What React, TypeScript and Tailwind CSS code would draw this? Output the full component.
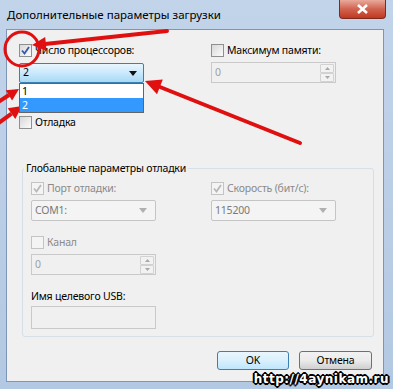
import type { ReactNode } from 'react'

const font = { fontFamily: '"Noto Sans", "Open Sans", sans-serif' }

const Check = ({ checked, disabled }: { checked?: boolean; disabled?: boolean }) => (
    <span
        className={
            'relative flex h-[13px] w-[13px] shrink-0 items-center justify-center border ' +
            (disabled
                ? 'border-[#c4c4c4] bg-[#f4f4f4]'
                : 'border-[#8e8f8f] bg-gradient-to-br from-[#d8d8d8] to-[#fbfbfb]')
        }
    >
        {checked && (
            <svg width="9" height="9" viewBox="0 0 9 9">
                <path
                    d="M1 4.5 L3.5 7.5 L8 1"
                    fill="none"
                    stroke={disabled ? '#b8b8b8' : '#3a57a6'}
                    strokeWidth="1.8"
                />
            </svg>
        )}
    </span>
)

const CheckRow = ({
    label,
    checked,
    disabled,
    gray,
    className = '',
}: {
    label: string
    checked?: boolean
    disabled?: boolean
    gray?: boolean
    className?: string
}) => (
    <div className={'flex h-[13px] items-center gap-[3px] ' + className}>
        <Check checked={checked} disabled={disabled} />
        <span
            className={
                'whitespace-nowrap text-[10.5px] leading-none tracking-[-0.2px] ' +
                (gray ? 'text-[#8a8a8a]' : 'text-black')
            }
        >
            {label}
        </span>
    </div>
)

const Arrow = ({ color }: { color: string }) => (
    <svg width="8" height="5" viewBox="0 0 8 5">
        <path d="M0 0 H8 L4 5 Z" fill={color} />
    </svg>
)

const Combo = ({ value, className = '' }: { value: string; className?: string }) => (
    <div
        className={
            'flex h-[21px] w-[125px] items-center justify-between rounded-[2px] border border-[#c5c5c5] bg-[#f4f4f4] pl-[3px] pr-[8px] ' +
            className
        }
    >
        <span className="text-[10.5px] tracking-[-0.2px] text-[#7a7a7a]">{value}</span>
        <Arrow color="#b0b0b0" />
    </div>
)

const SpinBtn = ({ up }: { up?: boolean }) => (
    <div className="flex h-[9px] w-[14px] items-center justify-center rounded-[1px] border border-[#d2d2d2] bg-[#f2f2f2]">
        <svg width="5" height="3" viewBox="0 0 5 3">
            <path d={up ? 'M0 3 H5 L2.5 0 Z' : 'M0 0 H5 L2.5 3 Z'} fill="#a8a8a8" />
        </svg>
    </div>
)

const Spin = ({ className = '' }: { className?: string }) => (
    <div
        className={
            'flex h-[21px] w-[125px] items-center justify-between border border-[#c9c9c9] bg-[#f0f0f0] pl-[3px] pr-[1px] ' +
            className
        }
    >
        <span className="text-[10.5px] text-[#a0a0a0]">0</span>
        <div className="flex flex-col">
            <SpinBtn up />
            <SpinBtn />
        </div>
    </div>
)

const Button = ({ children, primary }: { children: ReactNode; primary?: boolean }) => (
    <div
        className={
            'flex h-[19px] items-center justify-center rounded-[3px] border text-[10.5px] tracking-[-0.2px] ' +
            (primary
                ? 'w-[72px] border-[#3c7fb1] bg-gradient-to-b from-[#eaf6fd] via-[#d9f0fc] to-[#bee6fd]'
                : 'w-[73px] border-[#707070] bg-gradient-to-b from-[#f2f2f2] via-[#ebebeb] to-[#cfcfcf]')
        }
    >
        {children}
    </div>
)

export default function App() {
    return (
        <div className="relative h-[389px] w-[393px] overflow-hidden bg-gradient-to-b from-[#c2d4ea] to-[#b3c8e2]" style={font}>
            {/* title bar */}
            <div className="flex h-[29px] items-start justify-between">
                <span className="pl-[7px] pt-[6px] text-[11.5px] leading-[18px] text-black">
                    Дополнительные параметры загрузки
                </span>
                <div className="mr-[7px] flex h-[19px] w-[47px] items-center justify-center rounded-b-[4px] border border-t-0 border-[#7b2b20] bg-gradient-to-b from-[#e9a99b] via-[#d0634f] to-[#c2361f]">
                    <svg width="11" height="10" viewBox="0 0 11 10">
                        <path d="M1 1 L10 9 M10 1 L1 9" stroke="#ffffff" strokeWidth="2.6" />
                    </svg>
                </div>
            </div>

            {/* client area */}
            <div className="ml-[6px] mr-[9px] h-[353px] border border-[#7d96b8] bg-[#f0f0f0] pl-[12px] pr-[11px] pt-[14px]">
                <div className="grid grid-cols-[192px_125px]">
                    <div className="flex flex-col">
                        <CheckRow label="Число процессоров:" checked />
                        <div className="relative mt-[6px]">
                            <div className="flex h-[20px] w-[125px] items-center justify-between rounded-[2px] border border-[#3c7fb1] bg-gradient-to-b from-[#eaf6fd] via-[#c9e9fc] to-[#a7d9f5] pl-[3px] pr-[6px]">
                                <span className="text-[10.5px] text-black">2</span>
                                <Arrow color="#111111" />
                            </div>
                            <div className="absolute left-0 top-full z-10 w-[125px] border border-[#646464] bg-white">
                                <div className="flex h-[14px] items-center pl-[2px] text-[10.5px] leading-none text-black">1</div>
                                <div className="flex h-[14px] items-center bg-[#3399ff] pl-[2px] text-[10.5px] leading-none text-white">2</div>
                            </div>
                        </div>
                        <CheckRow label="Отладка" className="mt-[33px]" />
                    </div>
                    <div className="flex flex-col">
                        <CheckRow label="Максимум памяти:" />
                        <Spin className="mt-[5px]" />
                    </div>
                </div>

                <fieldset className="m-0 ml-[3px] mt-[32px] w-[352px] rounded-[3px] border border-[#d5dfe5] px-[8px] pb-[7px] pt-0">
                    <legend className="-ml-[7px] px-[2px] text-[10.5px] leading-[14px] tracking-[-0.2px] text-black">
                        Глобальные параметры отладки
                    </legend>
                    <div className="grid grid-cols-[180px_125px] pt-[7px]">
                        <div className="flex flex-col">
                            <CheckRow label="Порт отладки:" checked disabled gray />
                            <Combo value="COM1:" className="mt-[5px]" />
                        </div>
                        <div className="flex flex-col">
                            <CheckRow label="Скорость (бит/с):" checked disabled gray />
                            <Combo value="115200" className="mt-[5px]" />
                        </div>
                    </div>
                    <CheckRow label="Канал" disabled gray className="mt-[15px]" />
                    <Spin className="mt-[5px]" />
                    <div className="mt-[13px] text-[10.5px] leading-[16px] tracking-[-0.2px] text-black">Имя целевого USB:</div>
                    <div className="mt-[2px] h-[23px] w-[125px] border border-[#c9c9c9] bg-[#f0f0f0]" />
                </fieldset>

                <div className="mt-[14px] flex justify-end gap-[10px]">
                    <Button primary>OK</Button>
                    <Button>Отмена</Button>
                </div>
            </div>

            {/* watermark */}
            <div
                className="absolute bottom-[3px] right-[4px] text-[12px] font-bold leading-[14px] tracking-[0.5px] text-white [text-shadow:1px_1px_0_#000,-1px_-1px_0_#000,1px_-1px_0_#000,-1px_1px_0_#000,2px_0_0_#000,-2px_0_0_#000,0_2px_0_#000,0_-2px_0_#000]"
                style={{ fontFamily: '"DejaVu Sans", sans-serif' }}
            >
                http://4aynikam.ru
            </div>

            {/* red annotations */}
            <svg className="pointer-events-none absolute left-0 top-0" width="393" height="389" viewBox="0 0 393 389">
                <circle cx="22" cy="49" r="17" fill="none" stroke="#e01010" strokeWidth="3" />
                <path d="M167 31 L45 44" stroke="#e01010" strokeWidth="4" strokeLinecap="round" />
                <path d="M32 45 L45.2 37 L46.6 51 Z" fill="#e01010" />
                <path d="M300 143 L160 87" stroke="#e01010" strokeWidth="4" strokeLinecap="round" />
                <path d="M145 81 L162.8 79.5 L157 94.3 Z" fill="#e01010" />
                <path d="M-5 104 L9 95" stroke="#e01010" strokeWidth="4" />
                <path d="M19 89 L12.1 100.5 L5.7 90.3 Z" fill="#e01010" />
                <path d="M-4 125 L11.5 113.6" stroke="#e01010" strokeWidth="4" />
                <path d="M22 106 L15.3 118.9 L7.7 108.3 Z" fill="#e01010" />
            </svg>
        </div>
    )
}
